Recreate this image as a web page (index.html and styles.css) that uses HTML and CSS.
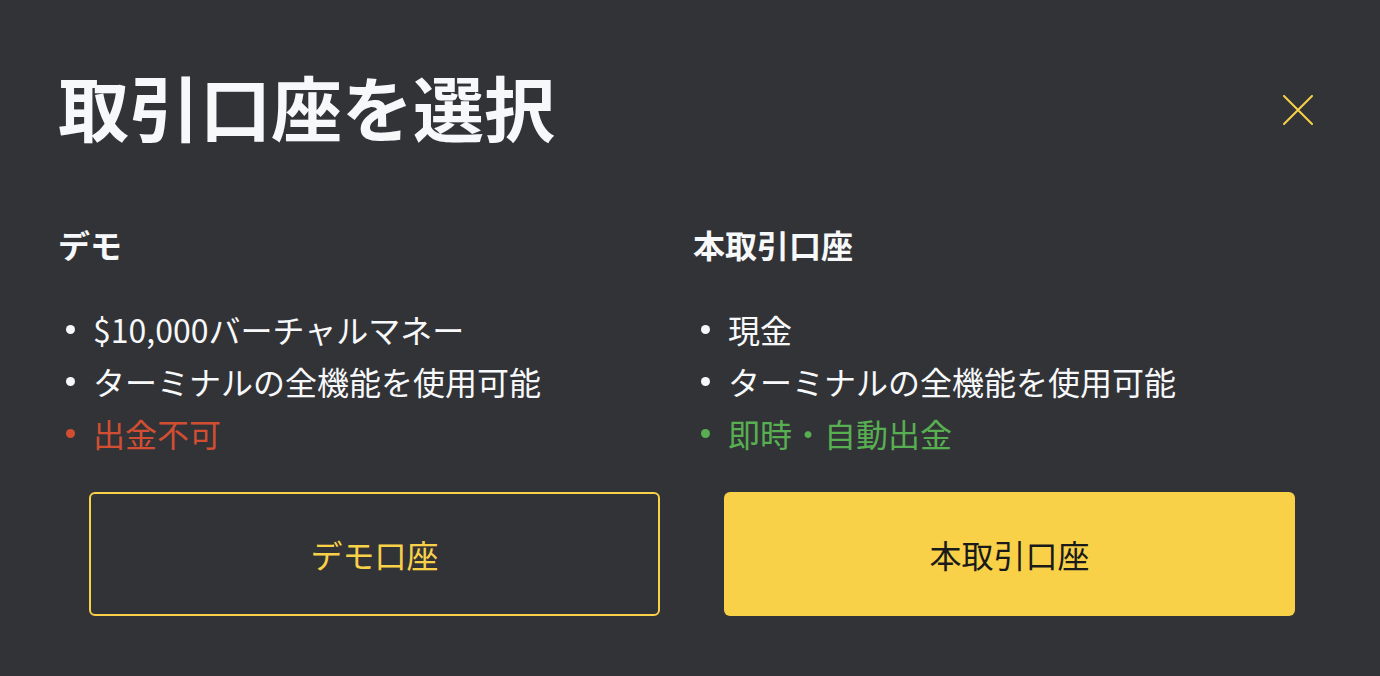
FILE: index.html
```html
<!DOCTYPE html>
<html lang="ja">
<head>
<meta charset="utf-8">
<link rel="stylesheet" href="styles.css">
</head>
<body>
<div class="modal">
  <div class="header">
    <h1 class="title">取引口座を選択</h1>
    <button class="close" aria-label="閉じる">
      <svg width="30" height="30" viewBox="0 0 30 30"><path d="M1 1L29 29M29 1L1 29" stroke="#F8D148" stroke-width="2" stroke-linecap="round"/></svg>
    </button>
  </div>
  <div class="columns">
    <div class="col">
      <h2 class="heading">デモ</h2>
      <ul class="features">
        <li class="item">$10,000バーチャルマネー</li>
        <li class="item">ターミナルの全機能を使用可能</li>
        <li class="item bad">出金不可</li>
      </ul>
      <button class="btn btn-outline">デモ口座</button>
    </div>
    <div class="col">
      <h2 class="heading">本取引口座</h2>
      <ul class="features">
        <li class="item">現金</li>
        <li class="item">ターミナルの全機能を使用可能</li>
        <li class="item good">即時・自動出金</li>
      </ul>
      <button class="btn btn-solid">本取引口座</button>
    </div>
  </div>
</div>
</body>
</html>
```
FILE: styles.css
```css
html, body {
  margin: 0;
  padding: 0;
  background: #323337;
}
body {
  width: 1380px;
  height: 676px;
  overflow: hidden;
  font-family: "Noto Sans CJK JP", "Noto Sans", sans-serif;
  color: #F7F8FA;
}
.modal {
  padding: 69px 0 0 58px;
}
.header {
  display: flex;
  align-items: center;
  justify-content: space-between;
  padding-right: 67px;
}
.title {
  margin: 0;
  font-size: 71px;
  line-height: 72px;
  font-weight: 700;
}
.close {
  background: none;
  border: 0;
  padding: 0;
  width: 30px;
  height: 30px;
  display: flex;
  cursor: pointer;
  margin-top: 10px;
}
.columns {
  display: grid;
  grid-template-columns: 635px 635px;
  margin-top: 87px;
}
.col {
  display: flex;
  flex-direction: column;
}
.heading {
  margin: 0;
  font-size: 32px;
  line-height: 32px;
  font-weight: 700;
}
.features {
  list-style: none;
  margin: 43px 0 0 0;
  padding: 0;
}
.item {
  font-size: 32px;
  line-height: 52px;
  display: flex;
  align-items: center;
}
.item::before {
  content: "";
  width: 9px;
  height: 9px;
  border-radius: 50%;
  background: currentColor;
  margin: 0 18px 0 8px;
  flex: none;
}
.bad { color: #D14E32; }
.good { color: #58AF52; }
.btn {
  margin: 33px 33px 0 31px;
  height: 124px;
  border-radius: 6px;
  font-family: inherit;
  font-size: 32px;
  cursor: pointer;
}
.btn-outline {
  background: transparent;
  border: 2px solid #F8D148;
  color: #F8D148;
}
.btn-solid {
  background: #F8D148;
  border: 0;
  color: #1A1A1A;
}
```
